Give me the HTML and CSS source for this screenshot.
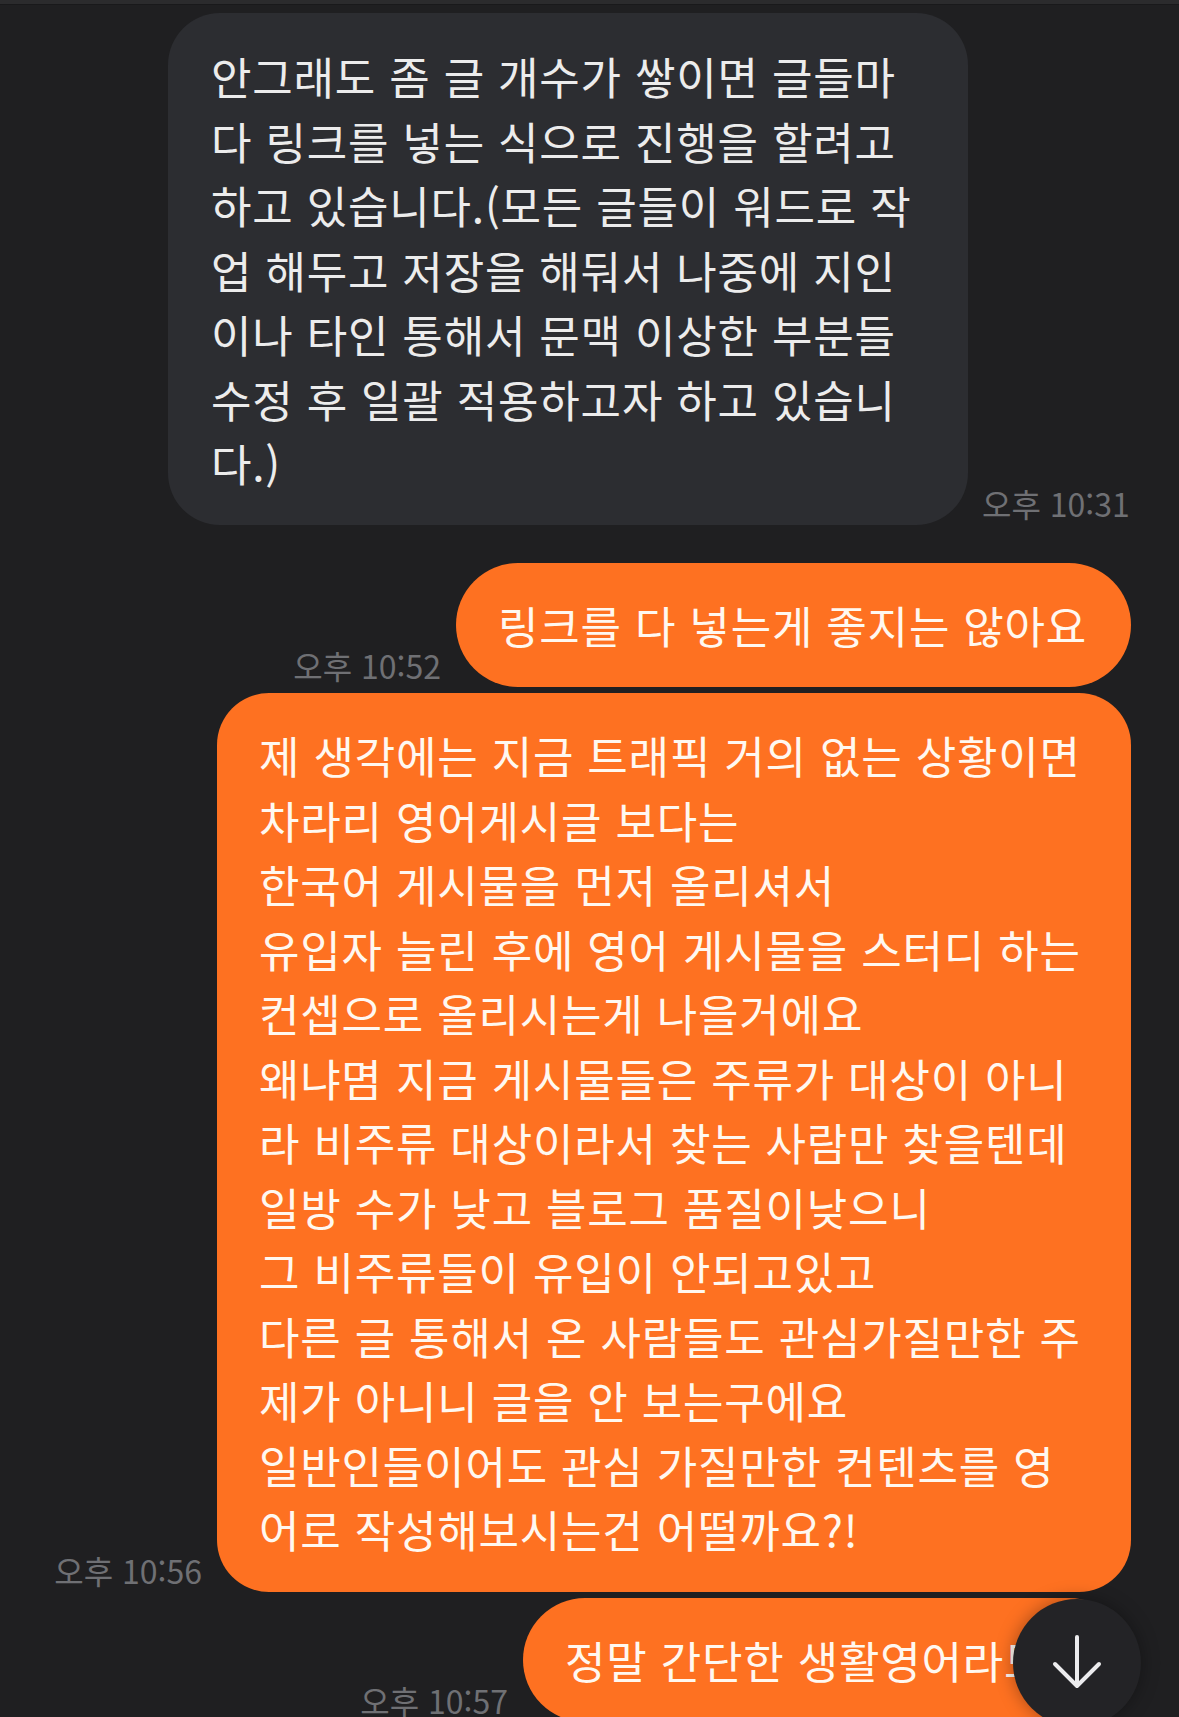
FILE: index.html
```html
<!DOCTYPE html>
<html lang="ko">
<head>
<meta charset="utf-8">
<title>채팅</title>
<link rel="stylesheet" href="styles.css">
</head>
<body>
<div class="topbar"></div>
<main class="chat">
  <div class="row row-in row-first">
    <div class="bubble bubble-in bubble-w1">안그래도 좀 글 개수가 쌓이면 글들마<br>다 링크를 넣는 식으로 진행을 할려고<br>하고 있습니다.(모든 글들이 워드로 작<br>업 해두고 저장을 해둬서 나중에 지인<br>이나 타인 통해서 문맥 이상한 부분들<br>수정 후 일괄 적용하고자 하고 있습니<br>다.)</div>
    <span class="time time-in">오후 10:31</span>
  </div>

  <div class="row row-out row-gap-lg">
    <span class="time time-out">오후 10:52</span>
    <div class="bubble bubble-out bubble-w2">링크를 다 넣는게 좋지는 않아요</div>
  </div>

  <div class="row row-out row-gap-sm">
    <span class="time time-out">오후 10:56</span>
    <div class="bubble bubble-out bubble-w3">제 생각에는 지금 트래픽 거의 없는 상황이면<br>차라리 영어게시글 보다는<br>한국어 게시물을 먼저 올리셔서<br>유입자 늘린 후에 영어 게시물을 스터디 하는<br>컨셉으로 올리시는게 나을거에요<br>왜냐몀 지금 게시물들은 주류가 대상이 아니<br>라 비주류 대상이라서 찾는 사람만 찾을텐데<br>일방 수가 낮고 블로그 품질이낮으니<br>그 비주류들이 유입이 안되고있고<br>다른 글 통해서 온 사람들도 관심가질만한 주<br>제가 아니니 글을 안 보는구에요<br>일반인들이어도 관심 가질만한 컨텐츠를 영<br>어로 작성해보시는건 어떨까요?!</div>
  </div>

  <div class="row row-out row-gap-sm">
    <span class="time time-out">오후 10:57</span>
    <div class="bubble bubble-out bubble-w4">정말 간단한 생활영어라도요</div>
  </div>
</main>

<button class="scroll-down" aria-label="아래로 이동">
  <svg width="52" height="56" viewBox="0 0 52 56" fill="none" stroke="#ececee" stroke-width="4" stroke-linecap="round" stroke-linejoin="round">
    <path d="M26 3 V51"/>
    <path d="M4 30 L26 52 L48 30"/>
  </svg>
</button>
</body>
</html>
```

FILE: styles.css
```css
html, body {
  margin: 0;
  padding: 0;
}

body {
  width: 1179px;
  height: 1717px;
  overflow: hidden;
  background: #1f1f21;
  font-family: "Noto Sans CJK KR", "Noto Sans", sans-serif;
  position: relative;
}

.topbar {
  height: 4px;
  background: #2b2b2d;
  border-bottom: 1px solid #19191b;
}

.chat {
  display: flex;
  flex-direction: column;
}

.row {
  display: flex;
  align-items: flex-end;
}

.row-first {
  margin-top: 8px;
  padding-left: 168px;
}

.row-out {
  justify-content: flex-end;
  padding-right: 48px;
}

.row-gap-lg {
  margin-top: 38px;
}

.row-gap-sm {
  margin-top: 6px;
}

.bubble {
  box-sizing: border-box;
  font-size: 44px;
  letter-spacing: 0.8px;
  line-height: 64.5px;
  white-space: nowrap;
  overflow: hidden;
}

.bubble-in {
  background: #2c2d31;
  color: #ececec;
  border-radius: 52px;
  padding: 31px 40px 29px 43px;
}

.bubble-out {
  background: #fe7121;
  color: #fff8f0;
  border-radius: 52px;
  padding: 30px 40px 30px 42px;
}

.bubble-w1 { width: 800px; }
.bubble-w2 { width: 675px; border-radius: 62px; }
.bubble-w3 { width: 914px; }
.bubble-w4 { width: 608px; border-radius: 62px; }

.time {
  font-size: 32px;
  line-height: 40px;
  color: #6f7074;
  white-space: nowrap;
  margin-bottom: 2px;
}

.time-in {
  margin-left: 14px;
}

.time-out {
  margin-right: 15px;
}

.scroll-down {
  position: absolute;
  left: 1013px;
  top: 1599px;
  width: 128px;
  height: 128px;
  border-radius: 50%;
  border: none;
  padding: 0;
  background: #232326;
  box-shadow: 0 0 18px rgba(0, 0, 0, 0.35);
  display: flex;
  align-items: center;
  justify-content: center;
}

.scroll-down svg {
  margin-top: -2px;
}
```
